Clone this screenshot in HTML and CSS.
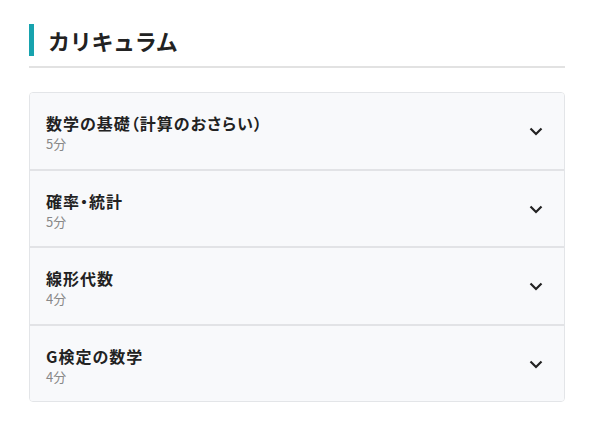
FILE: index.html
```html
<!DOCTYPE html>
<html lang="ja">
<head>
<meta charset="utf-8">
<link rel="stylesheet" href="styles.css">
</head>
<body>
<section class="curriculum">
  <div class="head">
    <h2 class="head-title">カリキュラム</h2>
  </div>
  <ul class="list">
    <li class="item">
      <div class="item-text">
        <div class="item-title">数学の基礎（計算のおさらい）</div>
        <div class="item-sub">5分</div>
      </div>
      <svg class="chev" width="14" height="9" viewBox="0 0 14 9"><path d="M1.5 1.5 L7 7 L12.5 1.5" fill="none" stroke="#222" stroke-width="2.2"/></svg>
    </li>
    <li class="item">
      <div class="item-text">
        <div class="item-title">確率・統計</div>
        <div class="item-sub">5分</div>
      </div>
      <svg class="chev" width="14" height="9" viewBox="0 0 14 9"><path d="M1.5 1.5 L7 7 L12.5 1.5" fill="none" stroke="#222" stroke-width="2.2"/></svg>
    </li>
    <li class="item">
      <div class="item-text">
        <div class="item-title">線形代数</div>
        <div class="item-sub">4分</div>
      </div>
      <svg class="chev" width="14" height="9" viewBox="0 0 14 9"><path d="M1.5 1.5 L7 7 L12.5 1.5" fill="none" stroke="#222" stroke-width="2.2"/></svg>
    </li>
    <li class="item">
      <div class="item-text">
        <div class="item-title">G検定の数学</div>
        <div class="item-sub">4分</div>
      </div>
      <svg class="chev" width="14" height="9" viewBox="0 0 14 9"><path d="M1.5 1.5 L7 7 L12.5 1.5" fill="none" stroke="#222" stroke-width="2.2"/></svg>
    </li>
  </ul>
</section>
</body>
</html>
```
FILE: styles.css
```css
* { box-sizing: border-box; }
html, body { margin: 0; padding: 0; background: #fff; }
body {
  font-family: "Noto Sans CJK JP", "Noto Sans", sans-serif;
  color: #222;
}
.curriculum {
  width: 536px;
  margin: 0 0 0 29px;
  padding-top: 24px;
}
.head {
  padding-bottom: 10px;
  border-bottom: 2px solid #e2e2e2;
}
.head-title {
  margin: 0;
  height: 32px;
  line-height: 32px;
  border-left: 5px solid #17a3ae;
  padding-left: 14px;
  font-size: 22px;
  font-weight: 700;
  color: #222;
  letter-spacing: -0.3px;
}
.list {
  list-style: none;
  margin: 24px 0 0;
  padding: 0;
  border: 1px solid #e3e5e8;
  border-radius: 4px;
  overflow: hidden;
}
.item {
  display: flex;
  align-items: center;
  justify-content: space-between;
  background: #f8f9fb;
  padding: 18px 21px 16px 16px;
  border-bottom: 2px solid #e2e3e6;
}
.item:last-child { border-bottom: none; }
.item-title {
  font-size: 16px;
  font-weight: 700;
  line-height: 24px;
  color: #222;
  font-feature-settings: "palt";
  letter-spacing: 1px;
}
.item-sub {
  font-size: 13px;
  line-height: 17.5px;
  color: #888;
}
.chev { display: block; }
```
